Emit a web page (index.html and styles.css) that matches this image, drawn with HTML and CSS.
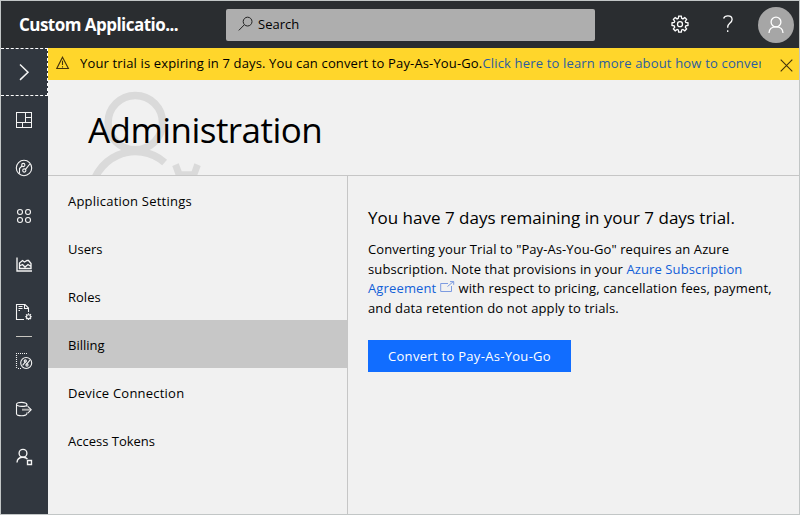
FILE: index.html
```html
<!DOCTYPE html>
<html lang="en">
<head>
<meta charset="utf-8">
<title>Administration</title>
<link rel="stylesheet" href="styles.css">
</head>
<body>
<header class="topbar">
  <div class="app-name"><span class="t-app">Custom Applicatio...</span></div>
  <div class="search">
    <svg class="search-icon" width="16" height="16" viewBox="0 0 16 16"><circle cx="9.6" cy="5.6" r="4.4"/><path d="M6.3 8.8L.8 14.4"/></svg>
    <span class="t-search">Search</span>
  </div>
  <div class="actions">
    <svg class="line gear" width="18" height="18" viewBox="0 0 18 18"><path d="M7.700 1.200h2.600l.4 2.200 1.200.5 1.900-1.300 1.800 1.800-1.300 1.900.5 1.200 2.200.4v2.600l-2.200.4-.5 1.200 1.300 1.900-1.800 1.800-1.900-1.300-1.200.5-.4 2.200H7.700l-.4-2.200-1.200-.5-1.900 1.300-1.800-1.800 1.300-1.900-.5-1.200L1 10.500V7.900l2.200-.4.5-1.200-1.300-1.900 1.800-1.800 1.900 1.300 1.200-.5z"/><circle cx="9" cy="9.200" r="2.500"/></svg>
    <svg class="line help" width="12" height="18" viewBox="0 0 12 18"><path d="M1.600 3.500C2.200 1.800 3.900.8 5.900.8c2.500 0 4.200 1.500 4.200 3.700 0 3.500-4.400 3.600-4.400 7.500v.8"/><path d="M5.700 15.200v1.700"/></svg>
    <div class="avatar"><svg class="line" width="16" height="18" viewBox="0 0 16 18"><circle cx="8" cy="6" r="4.900"/><path d="M1 17c.2-3.800 3.100-6.100 7-6.100s6.800 2.300 7 6.100"/></svg></div>
  </div>
</header>
<div class="shell">
  <nav class="rail">
    <div class="rail-item expand"><svg class="line" width="24" height="24" viewBox="0 0 24 24"><path d="M8 4.500l8 7.700-8 7.700"/></svg></div>
    <div class="rail-item"><svg class="line crisp" width="16" height="16" viewBox="0 0 16 16"><path d="M.5.5h15v15H.5zM.5 10.500h15M9.500.5v10M9.500 5.500h6M6.500 10.500v5"/></svg></div>
    <div class="rail-item"><svg class="line" width="18" height="18" viewBox="0 0 18 18"><circle cx="9" cy="9" r="7.700"/><circle cx="8.300" cy="6" r="1.600"/><circle cx="9.300" cy="11.500" r="1.600"/><path d="M7 7L4.500 9.500v5M10.500 10.400L14.800 5"/></svg></div>
    <div class="rail-item"><svg class="line" width="16" height="16" viewBox="0 0 16 16"><circle cx="4" cy="4" r="2.500"/><circle cx="12" cy="4" r="2.500"/><circle cx="4" cy="12" r="2.500"/><circle cx="12" cy="12" r="2.500"/></svg></div>
    <div class="rail-item"><svg class="line heavy" width="16" height="16" viewBox="0 0 16 16"><path d="M1 1.500v13.500h15"/><path d="M3.500 12.500V7l3-2.500L8.500 6l2.500-1.500h1.500l2.500 3v5zM3.500 10l3-1.500L9 11l3-2.500 3 2"/></svg></div>
    <div class="rail-item"><svg class="line" width="18" height="18" viewBox="0 0 18 18"><path d="M9 16.500H1.500v-15h8.500l3.500 3.500v4M9.500 1.500v4h4M3.500 3.500h4M3.500 5.500h4M3.500 7.500h1.500"/><circle cx="13.500" cy="13.700" r="2"/><path d="M13.500 10.300v1.300M13.500 15.800v1.300M10.100 13.700h1.300M15.600 13.700h1.300M11.100 11.300l1 1M15 15.200l1 1M11.100 16.100l1-1M15 12.200l1-1"/></svg></div>
    <hr class="rail-divider">
    <div class="rail-item"><svg class="line" width="18" height="18" viewBox="0 0 18 18"><path class="dots" d="M12 1.500H1"/><path class="dots" d="M1.500 3v14"/><path class="dots" d="M3 16.500h3"/><circle cx="11.200" cy="11" r="5.500"/><circle cx="10.300" cy="9" r="1.100"/><circle cx="12" cy="13" r="1.100"/><path d="M7.600 13.300l3-3.600M11.400 12.400l3.600-4.200"/></svg></div>
    <div class="rail-item"><svg class="line" width="18" height="18" viewBox="0 0 18 18"><ellipse cx="6.700" cy="4.400" rx="5.200" ry="2"/><path d="M1.500 4.400v9.300c0 1.100 2.300 2 5.200 2s5.200-.9 5.200-2v-1.200M11.900 4.400v2.300"/><path class="dim" d="M7 9.700h9"/><path d="M12.800 6.300l3.400 3.400-3.400 3.400"/></svg></div>
    <div class="rail-item"><svg class="line heavy" width="18" height="18" viewBox="0 0 18 18"><circle cx="8" cy="5.200" r="3.900"/><path d="M2 14.500c.2-3.200 2.600-5.300 6-5.300 2 0 3.500.6 4.400 1.800"/><path d="M12.500 12.500h4v4h-4z"/></svg></div>
  </nav>
  <div class="main">
    <div class="banner">
      <svg class="warn" width="14" height="14" viewBox="0 0 14 14"><path d="M6.500 1.200L12.400 12.500H.8zM6.500 4.800v4.200M6.500 10.200v1.200"/></svg>
      <p class="banner-text"><span class="t-ban">Your trial is expiring in 7 days. You can convert to Pay-As-You-Go.</span><a class="t-banlink">Click here to learn more about how to convert</a></p>
      <svg class="close" width="13" height="13" viewBox="0 0 13 13"><path d="M.7.700l11.600 11.600M12.300.7L.7 12.300"/></svg>
    </div>
    <div class="title">
      <svg class="title-art" width="300" height="95" viewBox="48 80 300 95"><circle cx="135.300" cy="122.600" r="27.200"/><path d="M91.300 195.700A44.200 44.200 0 0 1 164.600 162.500"/><path class="fill" d="M172.300 166l6.400-2.700 3 8h10l2.700-8 6.300 2.700-3.500 9.500h-21.500z"/></svg>
      <h1><span class="t-h1">Administration</span></h1>
    </div>
    <div class="body">
      <nav class="menu">
        <a class="menu-item"><span class="wide">Application Settings</span></a>
        <a class="menu-item"><span>Users</span></a>
        <a class="menu-item"><span>Roles</span></a>
        <a class="menu-item active"><span>Billing</span></a>
        <a class="menu-item"><span class="wide">Device Connection</span></a>
        <a class="menu-item"><span>Access Tokens</span></a>
      </nav>
      <section class="content">
        <h2><span class="t-h2">You have 7 days remaining in your 7 days trial.</span></h2>
        <p class="copy"><span class="c1">Converting your Trial to "Pay-As-You-Go" requires an Azure</span><br><span class="c2">subscription. Note that provisions in your <a>Azure Subscription</a></span><br><span class="c3"><a>Agreement <svg class="ext" width="15" height="12" viewBox="0 0 15 12"><path d="M8 2.500H.7v8h10.800V5M7.500 5.500l6-5M10 .6h3.700v3.200"/></svg></a> with respect to pricing, cancellation fees, payment,</span><br><span class="c4">and data retention do not apply to trials.</span></p>
        <button class="convert"><span class="t-btn">Convert to Pay-As-You-Go</span></button>
      </section>
    </div>
  </div>
</div>
</body>
</html>
```

FILE: styles.css
```css
* { box-sizing: border-box; }
body {
  margin: 0;
  width: 800px;
  height: 515px;
  border: 1px solid #c2c6c6;
  background: #f1f1f1;
  color: #000;
  font: 13px "Open Sans", "Noto Sans", sans-serif;
  display: flex;
  flex-direction: column;
  overflow: hidden;
}
h1, h2, p { margin: 0; font-weight: 400; }
span { white-space: nowrap; }
a { color: #1160d8; }
svg { display: block; fill: none; flex: none; }
.line { stroke: #fff; stroke-width: 1.3; }

.topbar { height: 47px; flex: none; background: #2a2d30; display: flex; align-items: center; }
.app-name { width: 224px; padding-left: 18px; color: #fff; font-size: 17px; font-weight: 700; letter-spacing: -.53px; }
.search {
  width: 369px; height: 32px; margin-left: 1px; padding-left: 12px;
  background: #aeaeae; border-radius: 2px;
  display: flex; align-items: center; gap: 4px;
}
.search-icon { stroke: #222; margin-top: -2px; }
.t-search { margin-top: -2px; }
.actions { flex: 1; display: flex; align-items: center; justify-content: flex-end; padding-right: 5px; }
.gear { margin: -2px 33px 0 0; }
.help { margin: -2px 24px 0 0; }
.avatar {
  width: 36px; height: 36px; border-radius: 50%; background: #a6a6a6;
  display: flex; align-items: center; justify-content: center;
}

.shell { flex: 1; display: flex; min-height: 0; }
.rail { width: 47px; flex: none; background: #31373f; }
.rail-item { height: 48px; display: flex; align-items: center; justify-content: center; padding-right: 1px; }
.rail-item .line { stroke-width: 1.1; stroke: #f4f4f4; }
.rail-item .heavy { stroke-width: 1.35; }
.rail-item .crisp { shape-rendering: crispEdges; stroke-width: 1; }
.rail-item.expand { border: 1px dashed #fff; border-left: 0; padding: 0; }
.rail-item.expand .line { stroke-width: 1.5; }
.rail-divider { width: 16px; height: 1px; margin: 0 0 0 15px; border: 0; background: #c8c6c0; }
.dots { stroke-dasharray: 1 1; }
.dim { stroke: #aaa; stroke-width: 2; }

.main { flex: 1; min-width: 0; display: flex; flex-direction: column; }
.banner { height: 32px; flex: none; background: #ffd62b; display: flex; align-items: center; padding: 0 6px 0 8px; }
.warn, .close { stroke: #43320c; stroke-width: 1.1; }
.warn { margin-top: -2px; }
.close { margin: 2px 0 0 auto; }
.banner-text { width: 681px; margin: -2px 0 0 10px; overflow: hidden; white-space: nowrap; letter-spacing: .145px; }
.banner a { color: #2b5da0; letter-spacing: .17px; }

.title { height: 96px; flex: none; border-bottom: 1px solid #c6c6c6; position: relative; }
.title-art { position: absolute; left: 0; top: 0; stroke: #dadada; stroke-width: 7.5; }
.title-art .fill { fill: #dadada; stroke: none; }
h1 { position: relative; padding: 26px 0 0 40px; font-size: 35px; line-height: 48px; letter-spacing: -.55px; }

.body { flex: 1; display: flex; min-height: 0; }
.menu { width: 300px; flex: none; border-right: 1px solid #c6c6c6; }
.menu-item { height: 48px; padding: 2px 20px 0; display: flex; align-items: center; color: #000; }
.menu-item .wide { letter-spacing: .22px; }
.menu-item.active { background: #c7c7c7; }
.content { padding: 28px 20px; }
h2 { font-size: 17px; line-height: 28px; }
.copy { margin-top: 8px; line-height: 19.5px; white-space: nowrap; }
.c1 { letter-spacing: .09px; }
.c2 { letter-spacing: .11px; }
.c3, .c4 { letter-spacing: .14px; }
.ext { display: inline-block; stroke: #7d9be0; margin: 0; vertical-align: 0; }
.convert {
  display: block; width: 203px; height: 32px; margin-top: 22px; padding: 0;
  border: 0; background: #116dff; color: #fff; font: inherit; letter-spacing: .3px;
}
```
